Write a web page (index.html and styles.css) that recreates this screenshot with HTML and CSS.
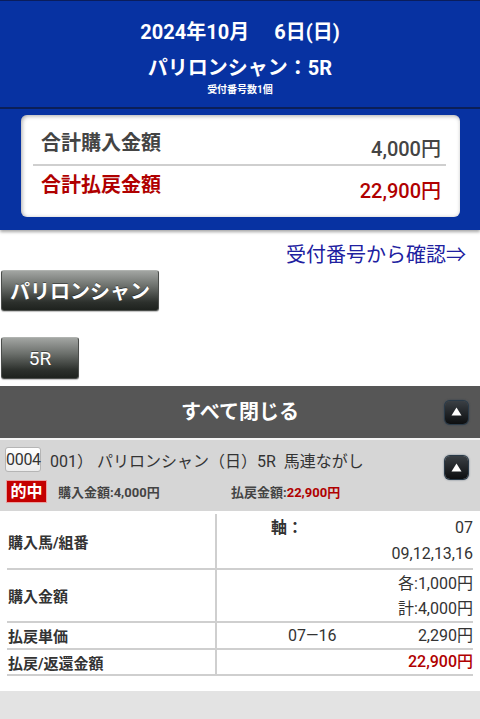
FILE: index.html
```html
<!DOCTYPE html>
<html lang="ja">
<head>
<meta charset="utf-8">
<title>照会</title>
<link rel="stylesheet" href="styles.css">
</head>
<body>
<header class="hdr">
  <div class="hdr-title">
    <div class="t1">2024年10月　 6日(日)</div>
    <div class="t2">パリロンシャン：5R</div>
    <div class="t3">受付番号数1個</div>
  </div>
  <div class="card-wrap">
    <div class="card">
      <div class="crow crow-buy"><span class="clabel">合計購入金額</span><span class="cval">4,000円</span></div>
      <div class="crow crow-pay"><span class="clabel">合計払戻金額</span><span class="cval">22,900円</span></div>
    </div>
  </div>
</header>

<div class="link-row"><a class="link" href="#">受付番号から確認⇒</a></div>

<div class="btn-row"><span class="btn btn-venue">パリロンシャン</span></div>
<div class="btn-row btn-row2"><span class="btn btn-race">5R</span></div>

<div class="bar">
  <span></span>
  <span class="bar-text">すべて閉じる</span>
  <span class="arrow-btn arrow-bar"><svg width="11" height="9" viewBox="0 0 11 9"><polygon points="5.5,0.5 10.5,8.5 0.5,8.5" fill="#fff"/></svg></span>
</div>

<section class="panel">
  <div class="panel-main">
    <div class="prow1"><span class="num-box">0004</span><span class="ticket">001）&nbsp;パリロンシャン（日）5R&nbsp;&nbsp;馬連ながし</span></div>
    <div class="prow2"><span class="hit">的中</span><span class="buy">購入金額:4,000円</span><span class="pay">払戻金額:<em>22,900円</em></span></div>
  </div>
  <span class="arrow-btn arrow-panel"><svg width="11" height="9" viewBox="0 0 11 9"><polygon points="5.5,0.5 10.5,8.5 0.5,8.5" fill="#fff"/></svg></span>
</section>

<table class="detail">
  <tr class="r1">
    <th>購入馬/組番</th>
    <td>
      <div class="vline"><span class="mid mid-axis">軸：</span><span class="val">07</span></div>
      <div class="vline"><span class="val">09,12,13,16</span></div>
    </td>
  </tr>
  <tr class="r2">
    <th>購入金額</th>
    <td>
      <div class="vline"><span class="val">各:1,000円</span></div>
      <div class="vline"><span class="val">計:4,000円</span></div>
    </td>
  </tr>
  <tr class="r3">
    <th>払戻単価</th>
    <td>
      <div class="vline"><span class="mid mid-pair">07—16</span><span class="val">2,290円</span></div>
    </td>
  </tr>
  <tr class="r4">
    <th>払戻/返還金額</th>
    <td>
      <div class="vline"><span class="val val-red">22,900円</span></div>
    </td>
  </tr>
</table>

<footer class="foot"></footer>
</body>
</html>
```

FILE: styles.css
```css
* { box-sizing: border-box; }
html, body { margin: 0; padding: 0; }
body {
  width: 480px;
  background: #fff;
  font-family: Roboto, "Noto Sans CJK JP", sans-serif;
  color: #333;
}

/* header */
.hdr {
  background: #0732a2;
  border-top: 1px solid #0a1d5c;
  box-shadow: 0 2px 3px rgba(0,0,0,0.35);
}
.hdr-title {
  color: #fff;
  font-weight: 700;
  text-align: center;
  padding-top: 17px;
  padding-bottom: 11px;
  border-bottom: 2px solid #0b1f58;
}
.t1 { font-size: 20px; line-height: 28px; white-space: pre; }
.t2 { font-size: 20px; line-height: 28px; margin-top: 8px; }
.t3 { font-size: 10px; line-height: 12px; margin-top: 2px; }

.card-wrap { padding: 6px 20px 13px 21px; }
.card {
  background: #fff;
  border-radius: 6px;
  height: 102px;
  padding: 0 14px 0 12px;
  box-shadow: inset 1px 1px 4px rgba(0,0,0,0.35);
}
.crow {
  display: flex;
  justify-content: space-between;
  align-items: flex-start;
  padding: 0 5px 0 8px;
}
.crow-buy {
  height: 51px;
  padding-top: 16px;
  border-bottom: 2px solid #cfcfcf;
  color: #444;
}
.crow-pay {
  padding-top: 7px;
  color: #b00000;
}
.clabel { font-size: 20px; line-height: 24px; font-weight: 700; }
.cval { font-size: 20px; line-height: 24px; font-weight: 500; margin-top: 6px; }

/* link */
.link-row {
  display: flex;
  justify-content: flex-end;
  padding: 12px 14px 0 0;
}
.link {
  color: #2020a0;
  text-decoration: none;
  font-size: 20px;
  line-height: 26px;
}

/* buttons */
.btn-row { display: flex; padding-left: 1px; margin-top: 2px; }
.btn-row2 { margin-top: 26px; }
.btn {
  display: inline-flex;
  align-items: center;
  justify-content: center;
  color: #fff;
  border-radius: 3px;
  background: linear-gradient(#a2a5a2 0%, #6a6e6a 40%, #2c302c 80%, #1e221e 100%);
  border: 1px solid #4a4d4a;
  border-top-color: #b0b3b0;
  box-shadow: 0 1px 1px rgba(0,0,0,0.25);
  text-shadow: 0 -1px 0 rgba(0,0,0,0.4);
}
.btn-venue {
  width: 158px;
  height: 41px;
  font-size: 20px;
  font-weight: 700;
}
.btn-race {
  width: 78px;
  height: 42px;
  font-size: 19px;
  font-weight: 400;
}

/* bar */
.bar {
  margin-top: 7px;
  height: 54px;
  background: #565656;
  border-bottom: 2px solid #f4f4f4;
  display: grid;
  grid-template-columns: 1fr auto 1fr;
  align-items: center;
}
.bar-text {
  color: #fff;
  font-size: 20px;
  font-weight: 700;
  line-height: 28px;
}
.arrow-btn {
  width: 23px;
  height: 23px;
  border-radius: 5px;
  background: linear-gradient(#3a3f44, #0c0e10);
  box-shadow: 0 0 0 1px #2a3a48, 0 0 2px 1px rgba(30,50,70,0.6);
  display: flex;
  align-items: center;
  justify-content: center;
}
.arrow-btn svg { display: block; margin-top: -1px; }
.arrow-bar { justify-self: end; margin-right: 12px; }

/* panel */
.panel {
  background: #d6d6d6;
  display: flex;
  align-items: flex-start;
  padding: 7px 0 8px 5px;
}
.panel-main { flex: 1; }
.arrow-panel { margin-top: 9px; margin-right: 12px; }
.prow1 { display: flex; align-items: center; height: 25px; }
.num-box {
  display: inline-block;
  height: 25px;
  line-height: 23px;
  width: 36px;
  font-size: 16px;
  color: #333;
  text-align: center;
  background: linear-gradient(#ffffff, #ececec);
  border: 1px solid #b5b5b5;
  border-radius: 3px;
  letter-spacing: -0.3px;
}
.ticket {
  margin-left: 9px;
  font-size: 16px;
  color: #333;
  white-space: nowrap;
}
.prow2 {
  display: flex;
  align-items: center;
  margin-top: 8px;
  height: 23px;
}
.hit {
  margin-left: 1px;
  width: 41px;
  height: 23px;
  line-height: 21px;
  text-align: center;
  background: #c40000;
  color: #fff;
  font-size: 16px;
  font-weight: 700;
  border: 1px solid #e8a0a0;
}
.buy, .pay {
  font-size: 13px;
  font-weight: 700;
  color: #444;
}
.buy { margin-left: 11px; width: 173px; }
.pay em { font-style: normal; color: #b00000; }

/* detail table */
.detail {
  width: 466px;
  margin: 3px 7px 0 7px;
  border-collapse: collapse;
}
.detail th {
  width: 209px;
  text-align: left;
  font-size: 15px;
  font-weight: 700;
  color: #333;
  padding: 0 0 0 1px;
  vertical-align: middle;
}
.detail td {
  border-left: 2px solid #cfcfcf;
  padding: 0;
  vertical-align: top;
}
.detail tr { border-bottom: 2px solid #cfcfcf; }
.r1 td { padding: 1px 0; height: 54px; }
.r1 .vline { height: 26px; line-height: 26px; }
.r2 td { height: 51px; padding-top: 1px; }
.r2 .vline, .r3 .vline, .r4 .vline { height: 25px; line-height: 25px; }
.r3 td { height: 25px; }
.r4 td { height: 24px; }
.r4 .vline { height: 24px; line-height: 24px; }
.vline {
  display: flex;
  font-size: 16px;
  color: #333;
}
.mid { font-weight: 400; }
.mid-axis { margin-left: 54px; font-weight: 700; }
.mid-pair { margin-left: 71px; }
.val { margin-left: auto; }
.val-red { color: #b00000; font-weight: 500; }

.foot {
  margin-top: 15px;
  height: 40px;
  background: #e3e3e3;
}
```
